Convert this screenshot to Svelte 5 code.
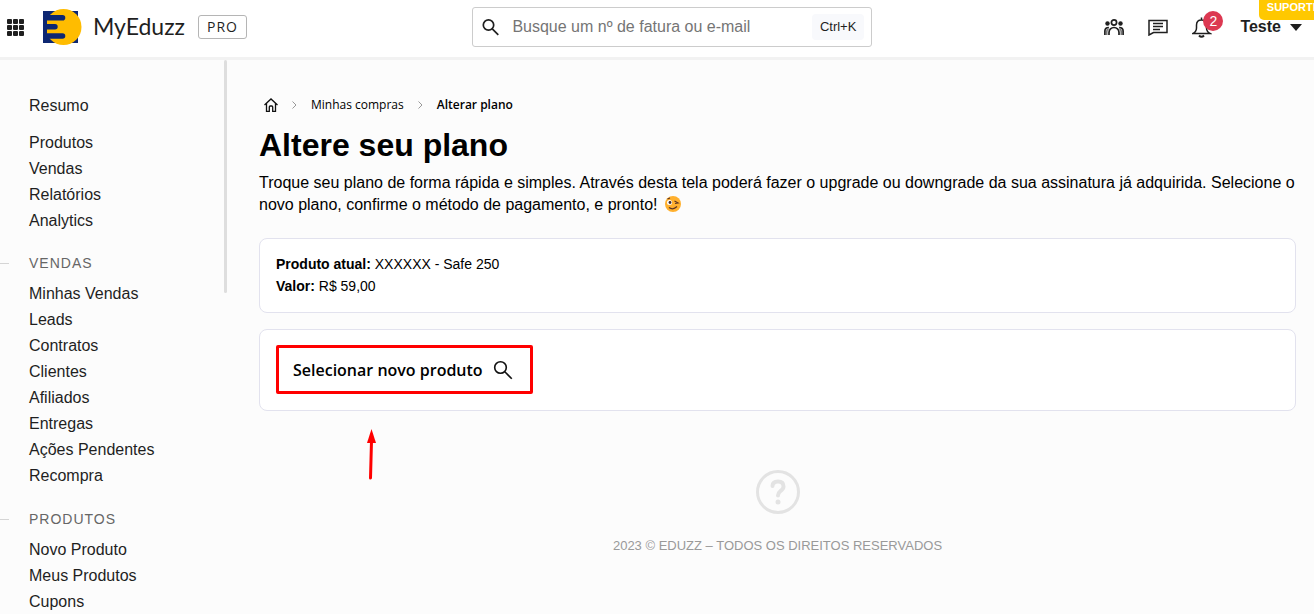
<script lang="ts">
  type Section = { title?: string; items: string[] };

  const sections: Section[] = [
    { items: ["Resumo"] },
    { items: ["Produtos", "Vendas", "Relatórios", "Analytics"] },
    {
      title: "Vendas",
      items: [
        "Minhas Vendas",
        "Leads",
        "Contratos",
        "Clientes",
        "Afiliados",
        "Entregas",
        "Ações Pendentes",
        "Recompra",
      ],
    },
    { title: "Produtos", items: ["Novo Produto", "Meus Produtos", "Cupons"] },
  ];

  const notifications = 2;
  let search = $state("");
</script>

<div class="page">
  <header class="topbar">
    <div class="brand">
      <button class="icon-button" aria-label="Aplicativos">
        <svg width="17" height="17" viewBox="0 0 17 17" fill="#1f1f1f">
          {#each [0, 6, 12] as y}
            {#each [0, 6, 12] as x}
              <rect {x} {y} width="5" height="5" rx="1" />
            {/each}
          {/each}
        </svg>
      </button>
      <a class="logo" href="#inicio">
        <svg width="40" height="36" viewBox="0 0 40 36">
          <path d="M1 2h35v32H1z" fill="#0d2772" />
          <circle cx="21.500" cy="18" r="18" fill="#ffbc00" />
          <path
            d="M1 6h19.500a2.800 2.800 0 0 1 0 5.600H5V15h8a2.700 2.700 0 0 1 0 5.400H5v3.800h15.500a2.800 2.800 0 0 1 0 5.600H1z"
            fill="#0d2772"
          />
        </svg>
        <span>MyEduzz</span>
      </a>
      <span class="plan">PRO</span>
    </div>

    <label class="search">
      <svg width="18" height="18" viewBox="0 0 18 18" fill="none" stroke="#1f1f1f" stroke-width="1.700">
        <circle cx="6.500" cy="7" r="5.200" />
        <path d="M10.300 10.800l6 6" />
      </svg>
      <input
        type="text"
        aria-label="Buscar"
        placeholder="Busque um nº de fatura ou e-mail"
        bind:value={search}
      />
      <kbd>Ctrl+K</kbd>
    </label>

    <div class="actions">
      <button class="icon-button" aria-label="Comunidade">
        <svg width="20" height="18" viewBox="0 0 20 18" fill="none" stroke="#1f1f1f" stroke-width="1.700">
          <circle cx="10" cy="4.500" r="2.600" />
          <circle cx="3.500" cy="5.500" r="2.200" fill="#1f1f1f" stroke="none" />
          <circle cx="16.500" cy="5.500" r="2.200" fill="#1f1f1f" stroke="none" />
          <path d="M5 17v-2.500a5 5 0 0 1 10 0V17M.9 17v-4q0-3.500 4-3.500M19.100 17v-4q0-3.500-4-3.500" />
          <path d="M2.700 17v-3q0-2.500 1.800-3.500M17.300 17v-3q0-2.500-1.800-3.500" stroke="#777" />
        </svg>
      </button>
      <button class="icon-button" aria-label="Mensagens">
        <svg width="20" height="18" viewBox="0 0 20 18" fill="none" stroke="#1f1f1f" stroke-width="1.500">
          <path d="M1 2.500h18v12H5.500L1 17z" />
          <path d="M5 5.500h10M5 8.500h10M5 11.500h7" />
        </svg>
      </button>
      <button class="icon-button bell" aria-label="Notificações">
        <svg width="20" height="22" viewBox="0 0 20 22" fill="none" stroke="#1f1f1f" stroke-width="1.500">
          <path d="M1 17.500h17q-3.500-2-3.500-5.500V9q0-5-5-5t-5 5v3q0 3.500-3.500 5.500zM9.500 4V1.500" />
          <path d="M7 19.500q2.500 2.500 5 0" stroke-width="2" />
        </svg>
        <span class="badge">{notifications}</span>
      </button>
      <button class="user">
        Teste
        <svg width="12" height="7" viewBox="0 0 12 7"><path d="M0 0h12L6 7z" fill="#1f1f1f" /></svg>
      </button>
    </div>
    <span class="ribbon">SUPORTE</span>
  </header>

  <div class="body">
    <nav class="sidebar" aria-label="Menu principal">
      {#each sections as section}
        <section class:titled={section.title}>
          {#if section.title}
            <h2>{section.title}</h2>
          {/if}
          <ul>
            {#each section.items as item}
              <li><a href="#menu">{item}</a></li>
            {/each}
          </ul>
        </section>
      {/each}
      <div class="thumb"></div>
    </nav>

    <main>
      <nav class="breadcrumb" aria-label="Breadcrumb">
        <a href="#inicio" aria-label="Início">
          <svg width="14" height="14" viewBox="0 0 14 14" fill="none" stroke="#111" stroke-width="1.300">
            <path d="M.5 7L7 1l6.500 6M2.500 5.500v7.800h2.800V9q0-1 1-1h1.400q1 0 1 1v4.300h2.800V5.500" />
          </svg>
        </a>
        <svg width="5" height="8" viewBox="0 0 5 8" fill="none" stroke="#999"><path d="M.5.5L4 4 .5 7.500" /></svg>
        <a href="#compras">Minhas compras</a>
        <svg width="5" height="8" viewBox="0 0 5 8" fill="none" stroke="#999"><path d="M.5.5L4 4 .5 7.500" /></svg>
        <span class="current">Alterar plano</span>
      </nav>

      <h1>Altere seu plano</h1>
      <p class="intro">
        Troque seu plano de forma rápida e simples. Através desta tela poderá fazer o upgrade ou
        downgrade da sua assinatura já adquirida. Selecione o novo plano, confirme o método de
        pagamento, e pronto!
        <svg class="emoji" width="18" height="18" viewBox="0 0 18 18" role="img" aria-label="Piscadela">
          <circle cx="9" cy="9" r="8" fill="#ffb02e" />
          <circle cx="5.500" cy="7.500" r="2.500" fill="#fff" />
          <circle cx="6" cy="7.500" r="1.400" fill="#402a32" />
          <path
            d="M10.500 6l3.500 2-3 .5M3.500 4l2.500-1M5 12.500q4 3 8-1"
            fill="none"
            stroke="#5c3324"
            stroke-width="1.200"
          />
        </svg>
      </p>

      <div class="card details">
        <p><strong>Produto atual:</strong> XXXXXX - Safe 250</p>
        <p><strong>Valor:</strong> R$ 59,00</p>
      </div>

      <div class="card">
        <button class="select-product">
          Selecionar novo produto
          <svg width="20" height="20" viewBox="0 0 20 20" fill="none" stroke="#111" stroke-width="1.600">
            <circle cx="7.500" cy="7.500" r="5.800" />
            <path d="M11.800 11.800l7 7" />
          </svg>
        </button>
        <svg class="pointer" width="12" height="52" viewBox="0 0 12 52">
          <path d="M7.500 12L6.500 49" stroke="#f00" stroke-width="3" stroke-linecap="round" />
          <path d="M7.500 0L12 14H3z" fill="#f00" />
        </svg>
      </div>

      <footer>
        <svg width="44" height="44" viewBox="0 0 44 44" fill="none" stroke="#e3e3e3" stroke-width="3">
          <circle cx="22" cy="22" r="20.500" />
          <path d="M16.500 16q0-4.500 5.500-4.500 5.500 0 5.500 5 0 2.500-3 4.500-2.500 2-2.500 4.500" stroke-width="4" stroke-linecap="round" />
          <circle cx="22" cy="32" r="2.500" fill="#e3e3e3" stroke="none" />
        </svg>
        <p>2023 © EDUZZ – TODOS OS DIREITOS RESERVADOS</p>
      </footer>
    </main>
  </div>
</div>

<style>
  :global(body) {
    background: #fcfcfc;
    overflow: hidden;
  }

  .page {
    height: 100vh;
    display: flex;
    flex-direction: column;
    overflow: hidden;
    color: #000;
    font-family: "Liberation Sans", Arial, sans-serif;
    font-size: 16px;
  }

  a {
    color: inherit;
    text-decoration: none;
  }

  button {
    border: none;
    padding: 0;
    background: none;
    color: inherit;
    font: inherit;
    cursor: pointer;
  }

  svg {
    display: block;
    flex: none;
  }

  p,
  ul,
  h1,
  h2 {
    margin: 0;
    padding: 0;
  }

  .topbar {
    position: relative;
    display: grid;
    grid-template-columns: 13fr 400px 12fr;
    align-items: center;
    flex: none;
    height: 54px;
    padding: 0 12px 3px 7px;
    border-bottom: 3px solid #f2f2f2;
    background: #fff;
    color: #1f1f1f;
  }

  .brand {
    display: flex;
    align-items: center;
  }

  .logo {
    display: flex;
    align-items: center;
    gap: 11px;
    margin-left: 18px;
    font-family: Lato, sans-serif;
    font-size: 23px;
    line-height: 28px;
  }

  .logo span {
    padding-bottom: 3px;
  }

  .plan {
    margin-left: 13px;
    padding: 0 8px;
    border: 1px solid #b5b5b5;
    border-radius: 3px;
    font-family: "Open Sans", sans-serif;
    font-size: 14px;
    line-height: 22px;
    letter-spacing: 1px;
  }

  .search {
    display: flex;
    align-items: center;
    height: 38px;
    padding: 0 7px 0 9px;
    border: 1px solid #ccc;
    border-radius: 3px;
  }

  .search input {
    flex: 1;
    min-width: 0;
    margin-left: 12px;
    padding: 0;
    border: none;
    outline: none;
    background: none;
    font: inherit;
  }

  .search input::placeholder {
    color: #757575;
  }

  .search kbd {
    padding: 0 8px;
    border-radius: 4px;
    background: #f8f9fc;
    font-family: inherit;
    font-size: 13px;
    line-height: 26px;
  }

  .actions {
    display: flex;
    align-items: center;
    justify-content: flex-end;
    gap: 24px;
  }

  .bell {
    position: relative;
  }

  .badge {
    position: absolute;
    top: -5px;
    right: -11px;
    width: 20px;
    border-radius: 50%;
    background: #dc3851;
    color: #fff;
    font-size: 14px;
    line-height: 20px;
    text-align: center;
  }

  .user {
    display: flex;
    align-items: center;
    gap: 9px;
    margin-left: 4px;
    font-weight: bold;
  }

  .ribbon {
    position: absolute;
    top: 0;
    right: -14px;
    height: 20px;
    padding: 0 8px;
    border-radius: 0 0 0 5px;
    background: #ffc800;
    color: #fff;
    font-size: 11px;
    font-weight: bold;
    line-height: 15px;
  }

  .body {
    display: flex;
    flex: 1;
    min-height: 0;
  }

  .sidebar {
    position: relative;
    flex: none;
    width: 227px;
    padding-top: 33px;
    overflow: hidden;
    box-sizing: border-box;
    color: #1f1f1f;
  }

  .sidebar section {
    margin-bottom: 11px;
  }

  .sidebar section.titled {
    margin: 17px 0 18px;
  }

  .sidebar ul {
    padding-left: 29px;
    list-style: none;
  }

  .sidebar li {
    line-height: 26px;
  }

  .sidebar h2 {
    display: flex;
    align-items: center;
    gap: 20px;
    margin-bottom: 6px;
    color: #666;
    font-size: 14px;
    font-weight: normal;
    line-height: 24px;
    letter-spacing: 1px;
    text-transform: uppercase;
  }

  .sidebar h2::before {
    content: "";
    width: 9px;
    height: 1px;
    background: #d5d5d5;
  }

  .thumb {
    position: absolute;
    top: 0;
    right: 0;
    width: 3px;
    height: 233px;
    border-radius: 2px;
    background: #dedede;
  }

  main {
    flex: 1;
    min-width: 0;
    padding: 36px 18px 0 32px;
  }

  .breadcrumb {
    display: flex;
    align-items: center;
    gap: 14px;
    padding-left: 5px;
    font-family: "Open Sans", sans-serif;
    font-size: 12px;
    line-height: 18px;
  }

  .current {
    font-weight: 600;
  }

  h1 {
    margin-top: 10px;
    font-size: 32px;
    line-height: 42px;
  }

  .intro {
    margin-top: 6px;
    line-height: 22px;
  }

  .emoji {
    display: inline-block;
    margin-left: 2px;
    vertical-align: -3px;
  }

  .card {
    position: relative;
    margin-top: 16px;
    padding: 15px 16px 16px;
    border: 1px solid #e2e2ee;
    border-radius: 8px;
    background: #fff;
  }

  .details {
    margin-top: 22px;
    padding: 14px 16px 15px;
    font-size: 14px;
    line-height: 22px;
  }

  .select-product {
    display: flex;
    align-items: center;
    gap: 10px;
    height: 49px;
    padding: 0 17px 0 14px;
    border: 3px solid #f00;
    border-radius: 2px;
    font-family: "Open Sans", sans-serif;
    font-weight: 600;
  }

  .pointer {
    position: absolute;
    top: 99px;
    left: 104px;
  }

  footer {
    display: flex;
    flex-direction: column;
    align-items: center;
    gap: 22px;
    margin-top: 59px;
    color: #999;
    font-size: 13px;
    line-height: 20px;
  }
</style>
